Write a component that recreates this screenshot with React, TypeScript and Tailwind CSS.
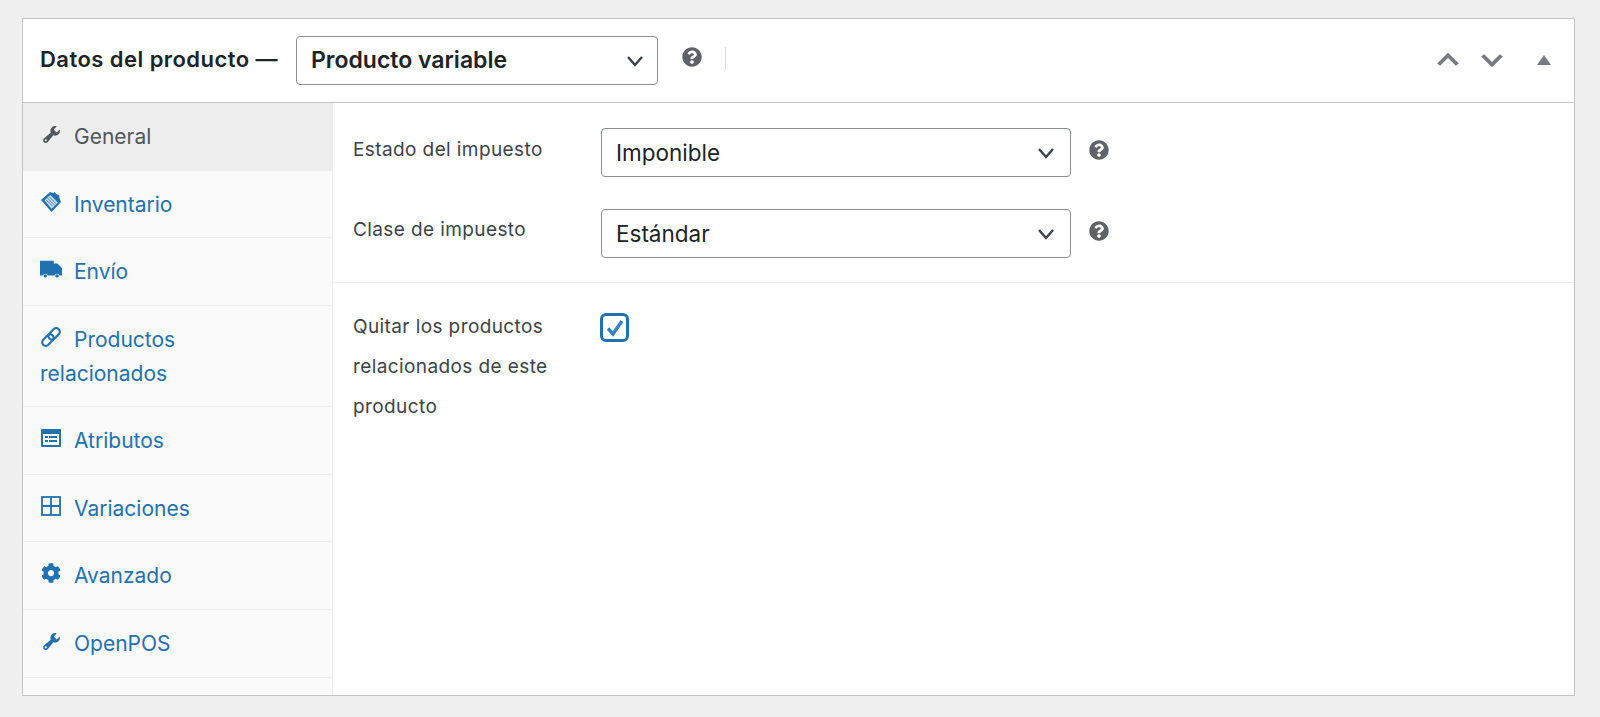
import { FaCog, FaQuestionCircle } from "react-icons/fa";

const font = "font-['Inter','Noto_Sans',sans-serif]";

function WrenchIcon() {
  return (
    <svg viewBox="0 0 20 20" className="h-[21px] w-[21px] fill-current">
      <path d="M16.68 9.77c-1.34 1.34-3.3 1.67-4.95.99l-5.41 6.52c-.99.99-2.59.99-3.58 0s-.99-2.59 0-3.57l6.52-5.42c-.68-1.65-.35-3.61.99-4.95 1.28-1.28 3.12-1.62 4.72-1.06l-2.89 2.89 2.82 2.82 2.86-2.87c.53 1.58.18 3.39-1.08 4.67zM3.81 16.21c.4.39 1.04.39 1.43 0 .4-.4.4-1.04 0-1.43-.39-.4-1.03-.4-1.43 0-.39.39-.39 1.03 0 1.43z" />
    </svg>
  );
}

function TagIcon() {
  return (
    <svg viewBox="0 0 22 22" className="h-[22px] w-[22px]">
      <path d="M1 9 10 1l3 1 2-1 1 2 3 1 .5 3L21 11l-9.5 10z" fill="currentColor" />
      <path d="M4.5 9.2 10.2 4l7.6 7.5-6.2 6.2z" fill="#cfe0ef" />
      <path d="m6 8.6 6.6 6.6M7.6 7.2l6.6 6.6M9.2 5.8l6.6 6.6" stroke="currentColor" strokeWidth="0.9" fill="none" />
    </svg>
  );
}

function TruckIcon() {
  return (
    <svg viewBox="0 0 24 20" className="h-[20px] w-[24px] fill-current">
      <path d="M0 1h15v3h4l5 5v8h-2.6a3 3 0 0 0-5.6 0H8.6a3 3 0 0 0-5.6 0H0z" />
      <circle cx="5.8" cy="17.5" r="1.9" />
      <circle cx="18.6" cy="17.5" r="1.9" />
    </svg>
  );
}

function LinkIcon() {
  return (
    <svg viewBox="0 0 20 20" className="h-[22px] w-[22px] fill-none stroke-current" strokeWidth="1.9">
      <g transform="rotate(-45 10 10)">
        <rect x="0" y="6.7" width="12" height="6.6" rx="3.3" />
        <rect x="8" y="6.7" width="12" height="6.6" rx="3.3" />
      </g>
    </svg>
  );
}

function AttributesIcon() {
  return (
    <svg viewBox="0 0 20 18" className="h-[18px] w-[20px]">
      <rect width="20" height="18" rx="1" fill="currentColor" />
      <rect x="2" y="5" width="16" height="11" fill="#fff" />
      <path d="M4 7h3v2H4zM8 7h8v2H8zM4 11h3v2H4zM8 11h8v2H8z" fill="currentColor" />
    </svg>
  );
}

function GridIcon() {
  return (
    <svg viewBox="0 0 20 20" className="h-[20px] w-[20px] fill-none stroke-current" strokeWidth="1.8">
      <rect x="1" y="1" width="18" height="18" />
      <path d="M10 1v18M1 10h18" />
    </svg>
  );
}

function Chevron({ dir = "down", className = "", weight = 2.4 }: { dir?: "down" | "up"; className?: string; weight?: number }) {
  return (
    <svg viewBox="0 0 18 12" preserveAspectRatio="none" className={`fill-none stroke-current ${className}`} strokeWidth={weight}>
      <path d={dir === "down" ? "M2 2l7 8 7-8" : "M2 10l7-8 7 8"} />
    </svg>
  );
}

function Help({ className = "" }: { className?: string }) {
  return <FaQuestionCircle className={`h-[20px] w-[20px] text-[#5f6367] ${className}`} />;
}

function FakeSelect({ value, className = "", chevron = "mr-[2px]" }: { value: string; className?: string; chevron?: string }) {
  return (
    <div className={`flex h-[49px] items-center justify-between rounded-[4px] border border-[#8c8f94] bg-white pl-[14px] pr-[13px] text-[#1d2327] ${className}`}>
      <span>{value}</span>
      <Chevron className={`${chevron} h-[12px] w-[18px] text-[#3c434a]`} />
    </div>
  );
}

const tabs = [
  { label: "General", icon: <WrenchIcon />, active: true, h: "h-[68px]" },
  { label: "Inventario", icon: <TagIcon />, h: "h-[67px]" },
  { label: "Envío", icon: <TruckIcon />, h: "h-[68px]" },
  { label: "Productos relacionados", icon: <LinkIcon />, h: "h-[101px]" },
  { label: "Atributos", icon: <AttributesIcon />, h: "h-[68px]" },
  { label: "Variaciones", icon: <GridIcon />, h: "h-[67px]" },
  { label: "Avanzado", icon: <FaCog className="h-[20px] w-[20px]" />, h: "h-[68px]" },
  { label: "OpenPOS", icon: <WrenchIcon />, h: "h-[68px]" },
];

export default function App() {
  return (
    <div className={`h-[717px] w-[1600px] overflow-hidden bg-[#f0f0f1] pl-[22px] pt-[18px] ${font}`}>
      <div className="flex h-[678px] w-[1553px] flex-col border border-[#c3c4c7] bg-white">
        <header className="flex h-[84px] shrink-0 items-center border-b border-[#c3c4c7] pl-[17px]">
          <h2 className="mb-[3px] w-[256px] text-[22px] font-semibold tracking-[0.45px] text-[#1d2327]">Datos del producto —</h2>
          <FakeSelect value="Producto variable" chevron="mr-0" className="w-[362px] text-[23px] font-semibold" />
          <Help className="ml-[24px] mb-[7px]" />
          <div className="ml-[23px] mb-[5px] h-[23px] w-px bg-[#dcdcde]" />
          <div className="ml-auto flex items-center pr-[23px] pb-[1px] text-[#787c82]">
            <Chevron dir="up" weight={3} className="h-[14px] w-[24px]" />
            <Chevron weight={3} className="ml-[20px] h-[14px] w-[24px]" />
            <div className="ml-[33px] h-0 w-0 border-x-[7px] border-b-[10px] border-x-transparent border-b-[#787c82]" />
          </div>
        </header>
        <div className="flex min-h-0 flex-1">
          <aside className="w-[310px] shrink-0 border-r border-[#eeeeee] bg-[#fafafa] text-[21px] leading-[34px]">
            {tabs.map((t) => (
              <div
                key={t.label}
                className={`${t.h} border-b pl-[17px] pr-[60px] pt-[17px] ${t.active ? "border-transparent bg-[#eeeeee] text-[#50575e]" : "border-[#eeeeee] text-[#2271b1]"}`}
              >
                <span className="mr-[12px] inline-flex w-[22px] -translate-y-[4px] justify-center align-middle">{t.icon}</span>
                {t.label}
              </div>
            ))}
          </aside>
          <main className="min-w-0 flex-1 text-[19px] tracking-[0.4px] text-[#3c434a]">
            <div className="flex flex-col gap-[32px] border-b border-[#eeeeee] pb-[24px] pl-[20px] pt-[25px]">
              <div className="flex">
                <span className="w-[248px] pt-[5px] leading-[34px]">Estado del impuesto</span>
                <FakeSelect value="Imponible" className="w-[470px] text-[22.5px] tracking-normal" />
                <Help className="ml-[18px] mt-[12px]" />
              </div>
              <div className="flex">
                <span className="w-[248px] pt-[4px] leading-[34px]">Clase de impuesto</span>
                <FakeSelect value="Estándar" className="w-[470px] text-[22.5px] tracking-normal" />
                <Help className="ml-[18px] mt-[12px]" />
              </div>
            </div>
            <div className="flex pl-[20px] pt-[24px]">
              <p className="w-[248px] pr-[30px] leading-[40px]">Quitar los productos relacionados de este producto</p>
              <div className="-ml-[1px] mt-[6px] flex h-[29px] w-[29px] items-center justify-center rounded-[6px] border-[3px] border-[#2271b1]">
                <svg viewBox="0 0 20 20" className="h-[20px] w-[20px] fill-none stroke-[#3582c4]" strokeWidth="3.4">
                  <path d="M3 10.5l5 5.5 9-13" />
                </svg>
              </div>
            </div>
          </main>
        </div>
      </div>
    </div>
  );
}
